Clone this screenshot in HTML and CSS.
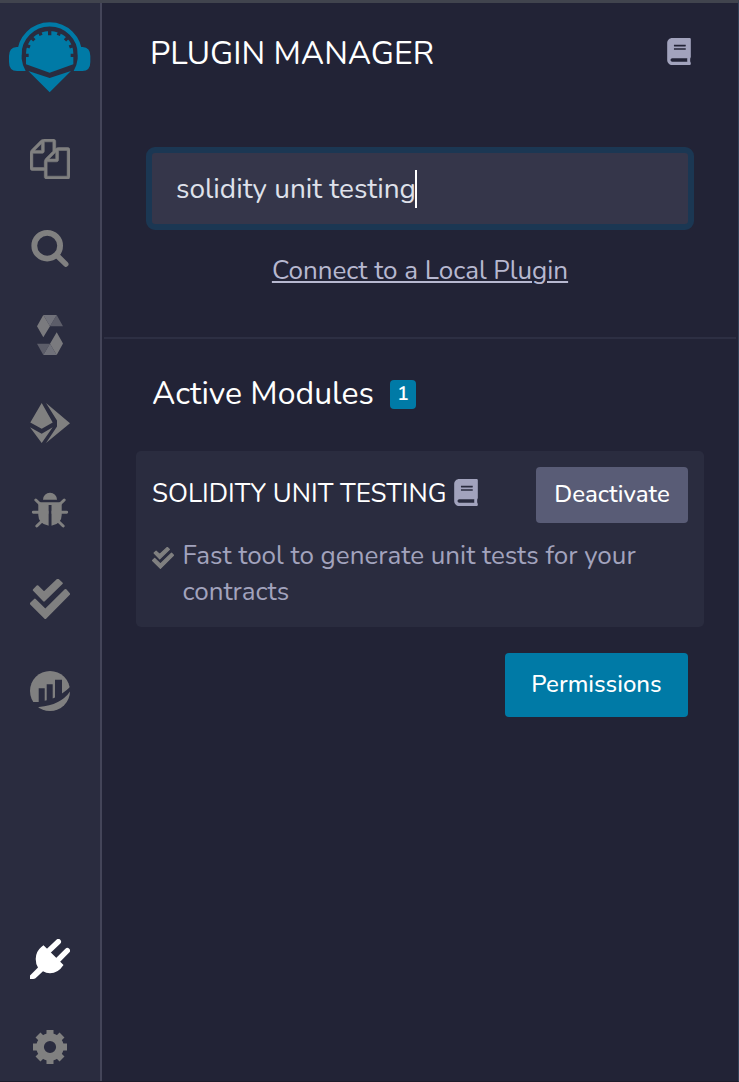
FILE: index.html
```html
<!DOCTYPE html>
<html lang="en">
<head>
<meta charset="utf-8">
<title>Plugin Manager</title>
<link rel="stylesheet" href="styles.css">
</head>
<body>
<svg class="defs" width="0" height="0">
  <symbol id="book" viewBox="0 0 448 512"><path d="M448 360V24c0-13.300-10.700-24-24-24H96C43 0 0 43 0 96v320c0 53 43 96 96 96h328c13.300 0 24-10.700 24-24v-16c0-7.500-3.500-14.300-8.900-18.700-4.200-15.400-4.200-59.300 0-74.700 5.400-4.300 8.900-11.100 8.900-18.600zM128 134c0-3.300 2.700-6 6-6h212c3.300 0 6 2.700 6 6v20c0 3.300-2.700 6-6 6H134c-3.300 0-6-2.700-6-6v-20zm0 64c0-3.300 2.700-6 6-6h212c3.300 0 6 2.700 6 6v20c0 3.300-2.700 6-6 6H134c-3.300 0-6-2.700-6-6v-20zm253.400 250H96c-17.700 0-32-14.300-32-32 0-17.600 14.400-32 32-32h285.400c-1.900 17.100-1.900 46.900 0 64z"/></symbol>
  <symbol id="checks" viewBox="0 0 40 40"><g stroke-width="2.200" stroke-linejoin="round"><path d="M3.900 11 7.500 7.400 14 13.700 27.800 .700 31.700 4.300 14 21.500Z"/><path d="M1 24.600 4.900 20.700 15.300 31 35.500 11.100 39 15 15.300 38.900Z"/></g></symbol>
</svg>
<div class="app">
  <nav class="sidebar">
    <svg class="logo" viewBox="0 9 300 300">
      <path d="M58 165a91 91 0 0 1 182 0" transform="translate(0 -1)" fill="none" stroke="#007aa6" stroke-width="13"/>
      <path d="M55 141H50Q27 143 27 168V186Q27 213 51 213H77Q67 196 65 176V141ZM243 141H248Q271 143 271 168V186Q271 213 247 213H221Q231 196 233 176V141Z" fill="#007aa6"/>
      <path d="M78 193V160A71 67 0 0 1 220 160V193L149 218Z" fill="#007aa6"/>
      <g stroke="#2a2c3f" stroke-width="10">
        <path d="M149 88V106M117 90l6 16M181 90l-6 16M90 108l13 13M208 108l-13 13M72 134l18 7M226 134l-18 7M70 166h16M228 166h-16"/>
      </g>
      <path d="M85 213 149 234 213 213 149 277Z" fill="#007aa6"/>
    </svg>
    <div class="icons">
      <svg class="icon" viewBox="0 0 1792 1792"><path stroke="#808080" stroke-width="25" d="M1696 384q40 0 68 28t28 68v1216q0 40-28 68t-68 28h-960q-40 0-68-28t-28-68v-288h-544q-40 0-68-28t-28-68v-672q0-40 20-88t48-76l408-408q28-28 76-48t88-20h416q40 0 68 28t28 68v328q68-40 128-40h416zm-544 213l-299 299h299v-299zm-640-384l-299 299h299v-299zm196 647l316-316v-416h-384v416q0 40-28 68t-68 28h-416v640h512v-256q0-40 20-88t48-76zm956 804v-1152h-384v416q0 40-28 68t-68 28h-416v640h896z"/></svg>
      <svg class="icon" viewBox="0 0 40 40"><g fill="none" stroke="#808080"><circle cx="17.200" cy="18.700" r="12.900" stroke-width="5.800"/><path d="M27.500 29 35.800 37.200" stroke-width="5.400" stroke-linecap="round"/></g></svg>
      <svg class="icon" viewBox="0 0 40 40"><path fill="#5c5d69" d="M26.700 0 33 11.300H20ZM13.300 40 7 28.700H20Z"/><path fill="#70717a" d="M13.300 0H26.700L20 11.300ZM26.700 40H13.300L20 28.700Z"/><path fill="#7a7a7e" d="M13.300 0 20 11.300 13.300 22.300 7 11.300ZM26.700 17.300 33 28.500 26.700 40 20 28.700Z"/></svg>
      <svg class="icon" viewBox="0 0 40 40"><path d="M11.700 0 22.700 19.500 11.700 25.700.300 19.500ZM0 24.200 11.700 30.700 22.700 24.200 11.700 40ZM16 0 40 20.300 16 40 27 23.500V17.500Z"/></svg>
      <svg class="icon" viewBox="0 0 40 40"><path d="M13 8.700a7 7 0 0 1 14 0ZM8.300 11.300H31.700V24Q31.700 33 21.300 34.700V14H18.800V34.700Q8.300 33 8.300 24Z"/><path d="M3.300 21.300H36.700M5.800 9 10 13M34.200 9 30 13M6.800 35 12 30M33.200 35 28 30" fill="none" stroke="#808080" stroke-width="2.900" stroke-linecap="round"/><path d="M18.800 14h2.500v22h-2.500z" fill="#2a2c3f"/></svg>
      <svg class="icon checks"><use href="#checks"/></svg>
      <svg class="icon chart" viewBox="0 0 40 40"><circle cx="20" cy="20" r="20"/><path fill="#2a2c3f" d="M0 31H8.700V17.300H14.700V29.800L16.700 29.300V13.300H22.700V27.500L25 26.500V8.700H32V22.500Q37 19.500 41 15V19Q32 34 9 36L3 38Z"/></svg>
    </div>
    <div class="icons bottom">
      <svg class="icon" viewBox="0 0 40 40"><g fill="none" stroke="#fff" stroke-width="5.400" stroke-linecap="round"><path d="M18 12.500 28.300 2.700M27.500 21.500 37.300 11.700"/></g><path fill="#fff" d="M13.500 6.300 33.500 26Q28 34.300 20 34.300 16 34.300 13 32.300L5.500 39.300Q4.500 40 3 40H0V36.500L8 28.500Q5.700 25 5.700 20 5.700 12.500 11.300 8Z"/></svg>
      <svg class="icon" viewBox="0 0 40 40"><g fill="none" stroke="#808080"><circle cx="20" cy="20" r="9.900" stroke-width="7.600"/><path d="M20 3V8M20 32V37M3 20H8M32 20H37M8 8 11.500 11.500M28.500 28.500 32 32M8 32 11.500 28.500M28.500 11.500 32 8" stroke-width="7"/></g></svg>
    </div>
  </nav>
  <main class="panel">
    <header class="head"><h1 class="title">PLUGIN MANAGER</h1><svg class="book"><use href="#book"/></svg></header>
    <div class="search"><span class="query">solidity unit testing</span><span class="caret"></span></div>
    <a class="connect">Connect to a Local Plugin</a>
    <section class="modules">
      <div class="heading"><h2 class="subtitle">Active Modules</h2><span class="badge">1</span></div>
      <article class="card">
        <div class="cardhead"><h3 class="name">SOLIDITY UNIT TESTING</h3><svg class="book"><use href="#book"/></svg><button class="btn deactivate"><span>Deactivate</span></button></div>
        <div class="desc"><svg class="mini"><use href="#checks"/></svg><p class="text">Fast tool to generate unit tests for your<br>contracts</p></div>
      </article>
      <button class="btn permissions"><span>Permissions</span></button>
    </section>
  </main>
</div>
</body>
</html>
```
FILE: styles.css
```css
* { box-sizing: border-box; }
body { margin: 0; background: #222336; font-family: Nunito, Lato, sans-serif; color: #fff; }
h1, h2, h3, p { margin: 0; font-weight: 400; white-space: nowrap; }
.defs { display: block; position: absolute; }
.app { display: flex; height: 1082px; border-top: 3px solid #41444e; border-bottom: 1px solid #1d1c2b; border-right: 1px solid #35445a; }
.sidebar { width: 102px; background: #2a2c3f; border-right: 2px solid #444559; display: flex; flex-direction: column; flex: none; }
.logo { width: 100px; height: 100px; display: block; flex: none; }
.icons { display: flex; flex-direction: column; align-items: center; gap: 48px; padding-top: 36px; }
.icon { width: 40px; height: 40px; display: block; fill: #808080; flex: none; }
.checks, .mini { stroke: #808080; }
.chart { margin-top: 4px; }
.bottom { margin-top: auto; padding: 0 0 14px; }
.panel { flex: 1; display: flex; flex-direction: column; align-items: center; min-width: 0; }
.head { width: 100%; display: flex; justify-content: space-between; align-items: flex-start; padding: 30px 47px 0 48px; height: 71px; }
.title { font-size: 32px; line-height: 42px; }
.book { width: 24px; height: 27px; fill: #a2a3bd; display: block; flex: none; }
.head .book { margin-top: 5px; }
.search { width: 548px; height: 83px; margin-top: 73px; border: 6px solid #1b3753; border-radius: 9px; background: #35364a; display: flex; align-items: center; padding-left: 24px; flex: none; }
.query { font-size: 28px; line-height: 36px; color: #dfe1ea; white-space: nowrap; }
.caret { width: 2px; height: 38px; margin-left: -1px; background: #fff; }
.connect { font-size: 26px; line-height: 36px; margin-top: 23px; color: #b7b8d0; text-decoration: underline; text-decoration-thickness: 2px; text-underline-offset: 2px; white-space: nowrap; }
.modules { width: 632px; margin-top: 48px; border-top: 2px solid #2d2f43; padding: 34px 32px 0; display: flex; flex-direction: column; }
.heading { display: flex; align-items: center; height: 42px; padding-left: 16px; }
.subtitle { font-size: 32px; line-height: 42px; width: 238px; }
.badge { width: 26px; height: 29px; border-radius: 4px; background: #007aa6; font-size: 20px; line-height: 27px; text-align: center; font-weight: 600; }
.card { margin-top: 36px; height: 176px; background: #2a2c3f; border-radius: 5px; padding: 16px; }
.cardhead { display: flex; height: 56px; align-items: flex-start; }
.name { font-size: 26px; line-height: 36px; width: 302px; padding-top: 9px; }
.cardhead .book { margin-top: 12px; }
.btn { border: 0; padding: 0 0 2px; border-radius: 4px; font: 530 24px/36px Nunito, Lato, sans-serif; color: #fff; }
.deactivate { width: 152px; height: 56px; background: #595c76; margin-left: auto; }
.desc { display: flex; gap: 8.500px; margin-top: 15px; }
.mini { width: 22px; height: 22px; margin-top: 9px; fill: #808080; flex: none; }
.text { font-size: 26px; line-height: 36px; color: #a2a3bd; }
.permissions { width: 183px; height: 64px; margin: 26px 16px 0 0; align-self: flex-end; background: #007aa6; }
```
